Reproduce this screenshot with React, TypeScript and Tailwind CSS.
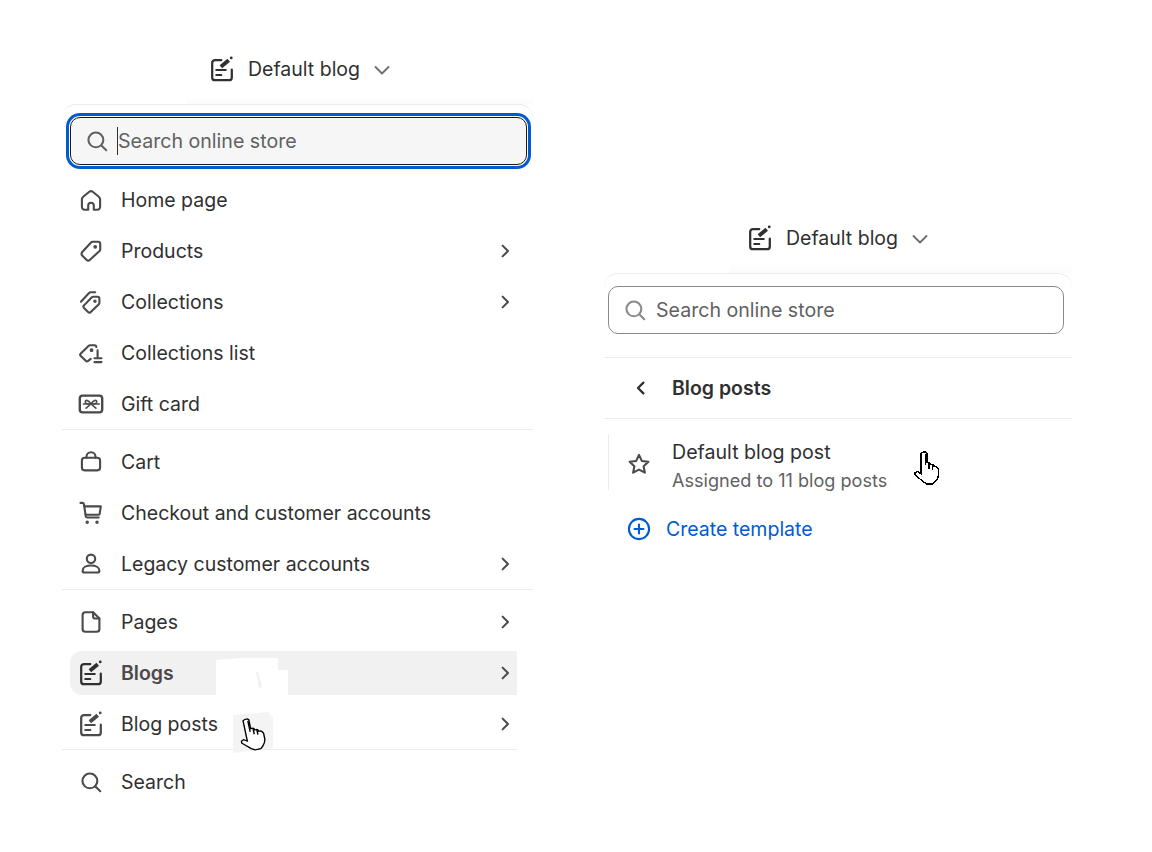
import type { ReactNode } from "react";

// stroke icons on a 20 unit grid, same family as the admin sidebar
function Icon({ children, className = "text-[#4a4a4a]", size = 28 }: { children: ReactNode; className?: string; size?: number }) {
  return (
    <svg
      viewBox="0 0 20 20"
      width={size}
      height={size}
      fill="none"
      stroke="currentColor"
      strokeWidth="1.5"
      strokeLinecap="round"
      strokeLinejoin="round"
      className={`shrink-0 ${className}`}
    >
      {children}
    </svg>
  );
}

const HomeIcon = () => (
  <Icon>
    <path d="M8 17H5.600A2 2 0 0 1 3.500 15V9.400c0-.7.3-1.300.9-1.700l4.400-3.600a2 2 0 0 1 2.400 0l4.400 3.600c.6.4.9 1 .9 1.700V15a2 2 0 0 1-2.100 2H12v-3a2 2 0 0 0-4 0v3Z" />
  </Icon>
);
const TagIcon = () => (
  <Icon>
    <path d="M3.600 10.900 10 3.900c.3-.3.7-.5 1.100-.5h3.900c.9 0 1.600.7 1.600 1.600v3.900c0 .4-.2.8-.5 1.100l-7 6.400c-.6.6-1.600.6-2.200 0l-2.300-2.300-.9-.9c-.6-.6-.7-1.600-.1-2.200Z" />
    <circle cx="13" cy="7" r=".6" fill="currentColor" />
  </Icon>
);
const CollectionsIcon = () => (
  <Icon>
    <path d="M5 12.400 10.600 6.600c.3-.3.6-.4 1-.4h3c.8 0 1.400.6 1.400 1.400v3c0 .4-.1.7-.4 1l-5.800 5.600c-.6.5-1.400.5-1.900 0L5 14.300c-.5-.5-.5-1.400 0-1.900Z" />
    <path d="M2.800 9.800 8.800 3.400c.2-.2.5-.4.800-.4H13" />
    <circle cx="12.800" cy="9.400" r=".5" fill="currentColor" />
  </Icon>
);
const CollectionsListIcon = () => (
  <Icon>
    <path d="M9.800 14.200 8 15.600c-.5.4-1.200.4-1.700 0l-3.600-3.500c-.5-.5-.5-1.300 0-1.800L8.400 4.800c.3-.2.600-.3.900-.3h3.200c.7 0 1.300.6 1.300 1.300" />
    <circle cx="10.400" cy="8" r=".6" fill="currentColor" />
    <path d="M14.700 8v5.200M12.500 13.800h5M12.500 16.500h5" />
  </Icon>
);
const GiftCardIcon = () => (
  <Icon>
    <rect x="2" y="4" width="16" height="12" rx="2" strokeWidth="1.700" />
    <path d="M4.500 10H16" strokeWidth="1" />
    <path d="M10 10C8 6.500 5.500 7 6 8.800c.2.800 2 1.200 4 1.200Zm0 0c2-3.500 4.500-3 4-1.200-.2.800-2 1.200-4 1.200Zm-3.500 3 3.500-3 3.500 3" strokeWidth="1.100" />
  </Icon>
);
const BagIcon = () => (
  <Icon>
    <path d="M5.500 7h9c1.200 0 2 .8 2 2v5c0 1.200-.8 2-2 2h-9c-1.200 0-2-.8-2-2V9c0-1.200.8-2 2-2Z" />
    <path d="M6.800 7V6.200a3.200 3.200 0 0 1 6.400 0V7" />
  </Icon>
);
const CartIcon = () => (
  <Icon>
    <path d="M2.500 2.800h1.300c.6 0 1.100.4 1.200 1l1.200 8.400c.1.600.6 1 1.200 1H15.500" />
    <path d="M5.300 5.300H17l-.8 5.200c-.1.500-.5.800-1 .8H6.200" />
    <circle cx="7.300" cy="16.600" r=".5" fill="currentColor" />
    <circle cx="14.300" cy="16.600" r=".5" fill="currentColor" />
  </Icon>
);
const PersonIcon = () => (
  <Icon>
    <circle cx="10" cy="6.300" r="3" />
    <path d="M4 14.800c0-2.400 2.700-3.700 6-3.700s6 1.300 6 3.700c0 .8-.6 1.300-1.300 1.300H5.300c-.7 0-1.300-.5-1.300-1.300Z" />
  </Icon>
);
const PageIcon = () => (
  <Icon>
    <path d="M6 3h5.500L16 7.500V15a2 2 0 0 1-2 2H6a2 2 0 0 1-2-2V5a2 2 0 0 1 2-2Z" />
    <path d="M11.500 3v3a1.500 1.500 0 0 0 1.500 1.500h3" />
  </Icon>
);
const BlogIcon = ({ className = "text-[#303030]" }: { className?: string }) => (
  <Icon className={className}>
    <path d="M9.500 3.600H5a2 2 0 0 0-2 2V16a2 2 0 0 0 2 2h10a2 2 0 0 0 2-2v-5.500" strokeWidth="1.600" />
    <path d="M5.900 10.700h6.800M5.900 14.300h3.600" strokeWidth="1.500" />
    <path d="M9.200 8.400 14.800 3.800" strokeWidth="2.800" strokeLinecap="butt" />
    <circle cx="16.600" cy="2.100" r="1" fill="currentColor" stroke="none" />
  </Icon>
);
const SearchIcon = ({ className = "text-[#4a4a4a]" }: { className?: string }) => (
  <Icon className={className}>
    <circle cx="9.200" cy="9.200" r="5.300" />
    <path d="m13.200 13.200 3.400 3.400" />
  </Icon>
);
const ChevronRight = () => (
  <Icon size={24}>
    <path d="m8 5.500 4.500 4.500L8 14.500" strokeWidth="1.700" />
  </Icon>
);
const StarIcon = () => (
  <Icon>
    <path d="M10 3.500l2 4.300 4.700.6-3.400 3.200.9 4.600L10 14l-4.200 2.200.9-4.600-3.400-3.200 4.700-.6L10 3.500Z" />
  </Icon>
);
const PlusCircle = () => (
  <Icon className="text-[#005bd3]">
    <circle cx="10" cy="10" r="7.200" />
    <path d="M10 6.800v6.400M6.800 10h6.400" />
  </Icon>
);

// pixel-ish hand pointer
function HandCursor({ className, smooth }: { className: string; smooth?: boolean }) {
  return (
    <svg
      viewBox="0 0 24 33"
      width="28"
      height="34"
      preserveAspectRatio="none"
      className={className}
      shapeRendering={smooth ? "geometricPrecision" : "crispEdges"}
    >
      <path
        d="M8 1h2l1 1v9h2l1 1v1h2l1 1v1h2l1 1 1 2v6l-1 3-2 3-2 2h-5l-3-2-4-4-3-3v-2l2-1 3 2V2Z"
        fill="#fff"
        stroke="#000"
        strokeWidth="1.200"
      />
      <path d="M10 3v11M13 11v6M16 13v5" stroke="#000" strokeWidth="1.200" fill="none" />
    </svg>
  );
}

function NavRow({ icon, label, chevron, active }: { icon: ReactNode; label: string; chevron?: boolean; active?: boolean }) {
  return (
    <div
      className={`flex items-center gap-[16px] pl-[7px] ${
        active ? "my-[3.5px] h-[44px] rounded-l-[12px] bg-[#f1f1f1]" : "h-[51px]"
      }`}
    >
      {icon}
      <span className={`flex-1 pt-[2px] text-[19.5px] ${active ? "font-semibold text-[#4a4a4a]" : "text-[#303030]"}`}>{label}</span>
      {chevron && <ChevronRight />}
    </div>
  );
}

function Header({ offset }: { offset: string }) {
  return (
    <div className="h-[104px] pt-[45px]">
      <div className={`flex h-[48px] items-center gap-[12px] ${offset}`}>
        <BlogIcon />
        <span className="pt-[2px] text-[19.5px] text-[#303030]">Default blog</span>
        <svg viewBox="0 0 20 20" width="20" height="20" fill="none" stroke="#707070" strokeWidth="1.900" strokeLinecap="round" strokeLinejoin="round" className="mt-[2px]">
          <path d="m3.500 7 6.500 6.500L16.500 7" />
        </svg>
      </div>
      <div className="ml-[125px] mt-[2px] h-[9px] bg-gradient-to-b from-white to-[#fbfbfb]" />
    </div>
  );
}

export default function App() {
  return (
    <div className="relative h-[852px] w-[1152px] overflow-hidden bg-white font-['Inter',_sans-serif]">
      <div className="flex items-start gap-[71px] pl-[62px]">
        {/* 왼쪽 */}
        <div className="w-[471px]">
          <Header offset="pl-[146px]" />
          <div className="rounded-t-[14px] border-t border-[#ebebeb] bg-white pt-[12px]">
            <div className="mx-[8px] flex h-[48px] w-[457px] items-center gap-[6px] rounded-[10px] border border-[#1a1a1a] bg-[#f6f6f6] pl-[12px] shadow-[0_0_0_1px_#fff,0_0_0_4px_#005bd3]">
              <SearchIcon className="text-[#616161]" />
              <span className="border-l border-[#303030] text-[19.6px] leading-[28px] text-[#616161]">Search online store</span>
            </div>
            <div className="mt-[9px] box-content w-[447px] pl-[8px]">
              <NavRow icon={<HomeIcon />} label="Home page" />
              <NavRow icon={<TagIcon />} label="Products" chevron />
              <NavRow icon={<CollectionsIcon />} label="Collections" chevron />
              <NavRow icon={<CollectionsListIcon />} label="Collections list" />
              <NavRow icon={<GiftCardIcon />} label="Gift card" />
            </div>
            <div className="mt-[-0.5px] border-t border-[#ebebeb]" />
            <div className="mt-[7px] box-content w-[447px] pl-[8px]">
              <NavRow icon={<BagIcon />} label="Cart" />
              <NavRow icon={<CartIcon />} label="Checkout and customer accounts" />
              <NavRow icon={<PersonIcon />} label="Legacy customer accounts" chevron />
            </div>
            <div className="mt-[-1px] border-t border-[#ebebeb]" />
            <div className="mt-[7px] box-content w-[447px] pl-[8px]">
              <NavRow icon={<PageIcon />} label="Pages" chevron />
              <NavRow icon={<BlogIcon />} label="Blogs" chevron active />
              <NavRow icon={<BlogIcon className="text-[#4a4a4a]" />} label="Blog posts" chevron />
            </div>
            <div className="mt-[-1px] w-[455px] border-t border-[#ebebeb]" />
            <div className="mt-[7px] box-content w-[447px] pl-[8px]">
              <NavRow icon={<SearchIcon />} label="Search" />
            </div>
          </div>
        </div>

        {/* 오른쪽 */}
        <div className="mt-[169px] w-[468px]">
          <Header offset="pl-[142px]" />
          <div className="rounded-t-[14px] border-t border-[#ebebeb] bg-white pt-[12px]">
            <div className="ml-[4px] flex h-[48px] w-[456px] items-center gap-[7px] rounded-[10px] border border-[#8a8a8a] pl-[12px]">
              <SearchIcon className="text-[#8a8a8a]" />
              <span className="pt-[1px] text-[19.6px] text-[#616161]">Search online store</span>
            </div>
            <div className="mt-[23px] flex h-[62px] items-center gap-[19px] border-y border-[#ebebeb] pl-[25px]">
              <Icon size={24} className="text-[#303030]">
                <path d="M12 5.500 7.500 10l4.500 4.500" strokeWidth="1.900" />
              </Icon>
              <span className="pt-[2px] text-[19.5px] font-semibold text-[#303030]">Blog posts</span>
            </div>
            <div className="ml-[4px] mt-[15px] flex h-[56px] items-center gap-[19px] border-l border-[#ebebeb] pl-[16px]">
              <div className="pt-[3px]">
                <StarIcon />
              </div>
              <div className="pt-[8px]">
                <div className="text-[19.6px] leading-[28px] text-[#303030]">Default blog post</div>
                <div className="text-[18.1px] leading-[28px] text-[#616161]">Assigned to 11 blog posts</div>
              </div>
            </div>
            <div className="ml-[21px] mt-[15px] flex h-[48px] items-center gap-[13px]">
              <PlusCircle />
              <span className="pt-[2px] text-[19.5px] text-[#005bd3]">Create template</span>
            </div>
          </div>
        </div>
      </div>

      {/* 스크린샷에 남아 있는 덮어쓴 자국과 커서 */}
      <div className="absolute left-[216px] top-[658px] h-[38px] w-[72px] bg-white [clip-path:polygon(0_2px,24px_0,62px_0,62px_12px,72px_12px,72px_37px,0_38px)]" />
      <div className="absolute left-[256px] top-[672px] h-[16px] w-[6px] bg-[#f1f1f1] [clip-path:polygon(0_0,2px_0,6px_15px,3px_16px)]" />
      <div className="absolute left-[233px] top-[712px] h-[41px] w-[40px] bg-[#f4f4f4] [clip-path:polygon(0_3px,35px_0,40px_6px,40px_36px,0_41px)]" />
      <HandCursor smooth className="absolute left-[239px] top-[717px] -rotate-12" />
      <HandCursor className="absolute left-[914px] top-[451px]" />
    </div>
  );
}
